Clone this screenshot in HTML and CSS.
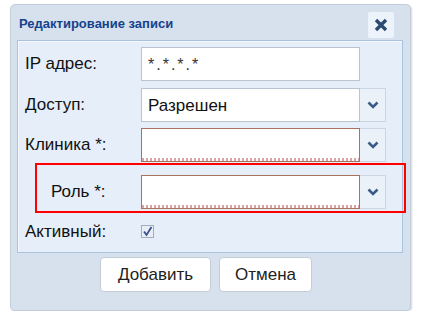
FILE: index.html
```html
<!doctype html>
<html lang="ru">
  <head>
    <meta charset="UTF-8" />
    <title>Редактирование записи</title>
    <link rel="stylesheet" href="styles.css">
  </head>
  <body>
    <div class="window">
      <div class="window-header">
        <span class="window-title">Редактирование записи</span>
        <button type="button" class="close-btn" aria-label="Закрыть">
          <svg width="16" height="16" viewBox="0 0 16 16">
            <path d="M3 3 L13 13 M13 3 L3 13" stroke="#2c4a70" stroke-width="3.4" stroke-linecap="butt" fill="none" />
          </svg>
        </button>
      </div>
      <div class="form-panel">
        <div class="form-row row-ip">
          <label class="field-label" for="ip">IP адрес:</label>
          <input id="ip" class="text-field" type="text" value="*.*.*.*" />
        </div>
        <div class="form-row row-access">
          <label class="field-label" for="access">Доступ:</label>
          <div class="combo">
            <input id="access" class="text-field" type="text" value="Разрешен" />
            <span class="combo-trigger">
              <svg width="12" height="8" viewBox="0 0 12 8"><path d="M1.5 1.5 L6 6 L10.5 1.5" stroke="#3b5b86" stroke-width="2.6" fill="none" /></svg>
            </span>
          </div>
        </div>
        <div class="form-row row-clinic">
          <label class="field-label" for="clinic">Клиника *:</label>
          <div class="combo">
            <input id="clinic" class="text-field invalid" type="text" value="" />
            <span class="combo-trigger">
              <svg width="12" height="8" viewBox="0 0 12 8"><path d="M1.5 1.5 L6 6 L10.5 1.5" stroke="#3b5b86" stroke-width="2.6" fill="none" /></svg>
            </span>
          </div>
        </div>
        <div class="form-row row-role">
          <label class="field-label indent" for="role">Роль *:</label>
          <div class="combo">
            <input id="role" class="text-field invalid" type="text" value="" />
            <span class="combo-trigger">
              <svg width="12" height="8" viewBox="0 0 12 8"><path d="M1.5 1.5 L6 6 L10.5 1.5" stroke="#3b5b86" stroke-width="2.6" fill="none" /></svg>
            </span>
          </div>
          <div class="highlight-box"></div>
        </div>
        <div class="form-row row-active">
          <label class="field-label" for="active">Активный:</label>
          <span class="checkbox">
            <svg width="11" height="11" viewBox="0 0 11 11"><path d="M2 5.5 L4.5 9 L9.5 1" stroke="#3a4f8c" stroke-width="1.8" fill="none" /></svg>
          </span>
        </div>
      </div>
      <div class="button-bar">
        <button type="button" class="btn btn-add">Добавить</button>
        <button type="button" class="btn btn-cancel">Отмена</button>
      </div>
    </div>
  </body>
</html>
```

FILE: styles.css
```css
body {
  margin: 0;
  background: #ffffff;
  font-family: Tahoma, "Liberation Sans", Arial, sans-serif;
}
.window {
  margin: 4px 0 0 10px;
  width: 399px;
  height: 305px;
  border: 1px solid #c2cdda;
  border-radius: 5px;
  background: #d7e1ee;
  box-shadow: 1px 1px 2px rgba(120, 140, 165, 0.35);
}
.window-header {
  display: flex;
  align-items: center;
  justify-content: space-between;
  height: 35px;
  padding: 0 16px 0 8px;
}
.window-title {
  font-size: 13px;
  font-weight: bold;
  color: #15428b;
  padding-top: 1px;
}
.close-btn {
  display: flex;
  align-items: center;
  justify-content: center;
  width: 26px;
  height: 26px;
  padding: 0;
  margin-top: 4px;
  border: none;
  border-radius: 2px;
  background: #edf3fa;
}
.form-panel {
  position: relative;
  margin-left: 6px;
  width: 378px;
  height: 211px;
  border: 1px solid #a9c2df;
  background: #e5eef9;
  box-shadow: inset 1px 1px 0 #f5f9fd;
  padding: 0 0 0 6px;
  box-sizing: content-box;
}
.form-row {
  display: flex;
  align-items: center;
}
.row-ip {
  margin-top: 6px;
}
.row-access {
  margin-top: 7px;
}
.row-clinic {
  margin-top: 6px;
}
.row-role {
  margin-top: 13px;
}
.row-active {
  margin-top: 16px;
}
.field-label {
  width: 116px;
  flex: none;
  padding-left: 1px;
  font-size: 17px;
  color: #111111;
}
.field-label.indent {
  padding-left: 27px;
  width: 90px;
}
.text-field {
  width: 219px;
  height: 34px;
  box-sizing: border-box;
  margin: 0;
  border: 1px solid #b8c4d2;
  background: #ffffff;
  padding: 2px 6px 0;
  font-family: Tahoma, "Liberation Sans", Arial, sans-serif;
  font-size: 17px;
  color: #111111;
  outline: none;
}
#ip {
  letter-spacing: 2px;
  font-size: 16px;
  color: #333333;
}
.text-field.invalid {
  border-color: #a9745f;
  background:
    repeating-linear-gradient(90deg, #d9a3a3 0 2px, #ffffff 2px 4px) left bottom / 100% 3px no-repeat,
    #ffffff;
}
.combo {
  display: flex;
}
.combo-trigger {
  display: flex;
  align-items: center;
  justify-content: center;
  width: 26px;
  height: 34px;
  box-sizing: border-box;
  border: 1px solid #ccd6e2;
  border-left: none;
  background: #ebf1f9;
}
.checkbox {
  display: flex;
  align-items: center;
  justify-content: center;
  width: 13px;
  height: 13px;
  box-sizing: border-box;
  border: 1px solid #a3adbb;
  background: #e9eef6;
}
.row-active .field-label {
  line-height: 13px;
}
.highlight-box {
  position: absolute;
  left: 17px;
  top: 122px;
  width: 371px;
  height: 50px;
  box-sizing: border-box;
  border: 2px solid #ff0000;
}
.button-bar {
  display: flex;
  gap: 8px;
  padding-left: 89px;
  margin-top: 4px;
}
.btn {
  height: 35px;
  border: 1px solid #c4ccd6;
  border-radius: 4px;
  background: #ffffff;
  font-family: Tahoma, "Liberation Sans", Arial, sans-serif;
  font-size: 17px;
  color: #222222;
  padding: 0;
}
.btn-add {
  width: 111px;
}
.btn-cancel {
  width: 93px;
}
```
